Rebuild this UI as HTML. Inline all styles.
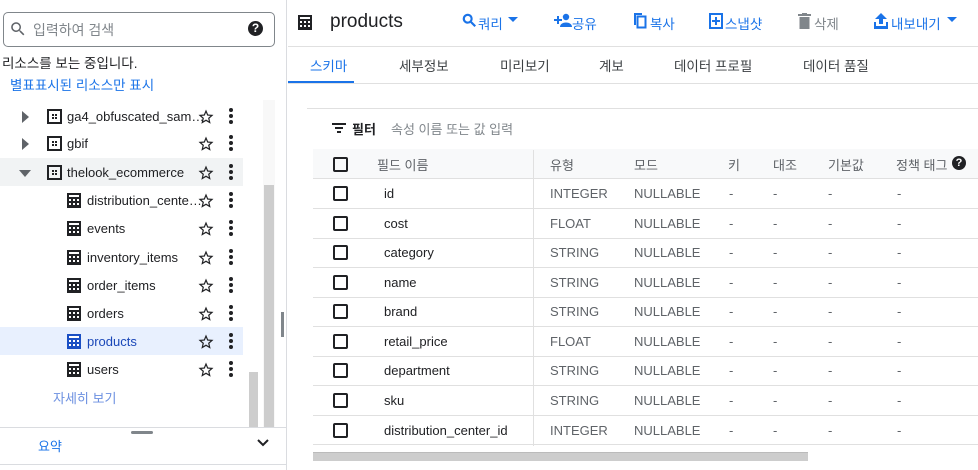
<!DOCTYPE html>
<html><head><meta charset="utf-8"><style>
*{margin:0;padding:0;box-sizing:border-box}
body{width:978px;height:470px;overflow:hidden;background:#fff;font-family:"Liberation Sans","Noto Sans CJK KR",sans-serif;color:#202124;position:relative;font-size:13px}
.a{position:absolute;white-space:nowrap}
.blue{color:#1a73e8}
.row{position:absolute;left:0;width:243px;height:28px}
.tb{position:absolute;left:67px;top:7px}
.ds{position:absolute;width:15px;height:15px;border:2px solid #202124}
.ds::before,.ds::after{content:"";position:absolute;left:3px;width:5px;height:2px;border-left:2px solid #202124;border-right:2px solid #202124;box-sizing:border-box}
.ds::before{top:3px}.ds::after{top:6px}
.star{position:absolute;left:197px}
.dots{position:absolute;left:229px;width:4px}
.dots i{display:block;width:4px;height:4px;border-radius:2px;background:#202124;margin-bottom:2px}
.cb{position:absolute;left:333px;width:15px;height:15px;border:2px solid #202124;border-radius:2px}
.tr{position:absolute;left:313px;width:665px;height:30px;border-bottom:1px solid #e0e0e0}
.tr span{position:absolute;top:7px}
.g{color:#5f6368}
.tab{position:absolute;top:55px;font-size:13.5px;color:#3c4043;white-space:nowrap}
</style></head><body>
<svg width="0" height="0" style="position:absolute"><defs>
<symbol id="tbl" viewBox="0 0 14 15"><rect width="14" height="15" fill="currentColor"/><g fill="#fff"><rect x="2" y="2" width="10" height="2"/><rect x="2" y="6" width="2" height="2"/><rect x="6" y="6" width="2" height="2"/><rect x="10" y="6" width="2" height="2"/><rect x="2" y="10" width="2" height="2"/><rect x="6" y="10" width="2" height="2"/><rect x="10" y="10" width="2" height="2"/></g></symbol>
<symbol id="star" viewBox="0 0 24 24"><path d="M22 9.24l-7.19-.62L12 2 9.19 8.63 2 9.24l5.46 4.73L5.82 21 12 17.27 18.18 21l-1.63-7.03L22 9.24zM12 15.4l-3.76 2.27 1-4.28-3.32-2.88 4.38-.38L12 6.1l1.71 4.04 4.38.38-3.32 2.88 1 4.28L12 15.4z" fill="#202124"/></symbol>
</defs></svg>
<!-- left panel -->
<div class="a" style="left:3px;top:12px;width:272px;height:35px;border:1px solid #80868b;border-radius:5px"></div>
<svg class="a" style="left:9px;top:20px" width="18" height="18" viewBox="0 0 24 24"><path d="M15.5 14h-.8l-.3-.3A6.5 6.5 0 1 0 9.5 16a6.5 6.5 0 0 0 4.2-1.6l.3.3v.8l5 5 1.5-1.5-5-5zm-6 0A4.5 4.5 0 1 1 14 9.5 4.5 4.5 0 0 1 9.5 14z" fill="#5f6368"/></svg>
<div class="a" style="left:33px;top:20px;font-size:14px;color:#80868b">입력하여 검색</div>
<div class="a" style="left:248px;top:21px;width:15px;height:15px;border-radius:50%;background:#202124;color:#fff;font-size:12px;font-weight:bold;text-align:center;line-height:15px">?</div>
<div class="a" style="left:2px;top:52px;font-size:13.5px">리소스를 보는 중입니다.</div>
<div class="a blue" style="left:10px;top:74px;font-size:13.5px">별표표시된 리소스만 표시</div>
<div class="a" style="left:263px;top:100px;width:12px;height:327px;background:#f8f8f8"></div>
<div class="a" style="left:264px;top:185px;width:10px;height:242px;background:#cdcdcd"></div>
<div class="a" style="left:249px;top:372px;width:9px;height:55px;background:#cdcdcd"></div>
<div class="a" style="left:286px;top:0;width:1px;height:470px;background:#dadce0"></div>
<div class="a" style="left:281px;top:312px;width:3px;height:25px;background:#80868b"></div>

<div class="row" style="top:103px"><div class="a" style="left:22px;top:8px;border-left:7px solid #5f6368;border-top:6px solid transparent;border-bottom:6px solid transparent"></div><div class="ds" style="left:47px;top:6px"></div><div class="a" style="left:67px;top:6px">ga4_obfuscated_sam…</div><svg class="star" style="top:5px" width="18" height="18"><use href="#star"/></svg><div class="dots" style="top:5px"><i></i><i></i><i></i></div></div>
<div class="row" style="top:130px"><div class="a" style="left:22px;top:8px;border-left:7px solid #5f6368;border-top:6px solid transparent;border-bottom:6px solid transparent"></div><div class="ds" style="left:47px;top:6px"></div><div class="a" style="left:67px;top:6px">gbif</div><svg class="star" style="top:5px" width="18" height="18"><use href="#star"/></svg><div class="dots" style="top:5px"><i></i><i></i><i></i></div></div>
<div class="row" style="top:158px;background:#f1f3f4"><div class="a" style="left:19px;top:12px;border-top:7px solid #5f6368;border-left:6px solid transparent;border-right:6px solid transparent"></div><div class="ds" style="left:47px;top:7px"></div><div class="a" style="left:67px;top:7px">thelook_ecommerce</div><svg class="star" style="top:6px" width="18" height="18"><use href="#star"/></svg><div class="dots" style="top:6px"><i></i><i></i><i></i></div></div>

<div class="row" style="top:186px"><svg class="tb" width="14" height="15" style="color:#202124"><use href="#tbl"/></svg><div class="a" style="left:87px;top:7px">distribution_cente…</div><svg class="star" style="top:6px" width="18" height="18"><use href="#star"/></svg><div class="dots" style="top:6px"><i></i><i></i><i></i></div></div>
<div class="row" style="top:214px"><svg class="tb" width="14" height="15" style="color:#202124"><use href="#tbl"/></svg><div class="a" style="left:87px;top:7px">events</div><svg class="star" style="top:6px" width="18" height="18"><use href="#star"/></svg><div class="dots" style="top:6px"><i></i><i></i><i></i></div></div>
<div class="row" style="top:243px"><svg class="tb" width="14" height="15" style="color:#202124"><use href="#tbl"/></svg><div class="a" style="left:87px;top:7px">inventory_items</div><svg class="star" style="top:6px" width="18" height="18"><use href="#star"/></svg><div class="dots" style="top:6px"><i></i><i></i><i></i></div></div>
<div class="row" style="top:271px"><svg class="tb" width="14" height="15" style="color:#202124"><use href="#tbl"/></svg><div class="a" style="left:87px;top:7px">order_items</div><svg class="star" style="top:6px" width="18" height="18"><use href="#star"/></svg><div class="dots" style="top:6px"><i></i><i></i><i></i></div></div>
<div class="row" style="top:299px"><svg class="tb" width="14" height="15" style="color:#202124"><use href="#tbl"/></svg><div class="a" style="left:87px;top:7px">orders</div><svg class="star" style="top:6px" width="18" height="18"><use href="#star"/></svg><div class="dots" style="top:6px"><i></i><i></i><i></i></div></div>
<div class="row" style="top:327px;background:#e8f0fe"><svg class="tb" width="14" height="15" style="color:#1a4fc4"><use href="#tbl"/></svg><div class="a" style="left:87px;top:7px;color:#1a47b8">products</div><svg class="star" style="top:6px" width="18" height="18"><use href="#star"/></svg><div class="dots" style="top:6px"><i></i><i></i><i></i></div></div>
<div class="row" style="top:355px"><svg class="tb" width="14" height="15" style="color:#202124"><use href="#tbl"/></svg><div class="a" style="left:87px;top:7px">users</div><svg class="star" style="top:6px" width="18" height="18"><use href="#star"/></svg><div class="dots" style="top:6px"><i></i><i></i><i></i></div></div>
<div class="a" style="left:53px;top:388px;font-size:13px;color:#6b8fe0">자세히 보기</div>
<div class="a" style="left:0;top:427px;width:287px;height:1px;background:#dadce0"></div>
<div class="a" style="left:131px;top:431px;width:22px;height:3px;background:#80868b;border-radius:2px"></div>
<div class="a blue" style="left:38px;top:436px;font-size:13px">요약</div>
<svg class="a" style="left:256px;top:438px" width="14" height="10" viewBox="0 0 14 10"><path d="M2 2l5 5 5-5" fill="none" stroke="#202124" stroke-width="2"/></svg>
<div class="a" style="left:0;top:464px;width:287px;height:1px;background:#dadce0"></div>

<!-- right header -->
<svg class="a" style="left:298px;top:15px;color:#202124" width="14" height="15"><use href="#tbl"/></svg>
<div class="a" style="left:330px;top:11px;font-size:19px">products</div>
<svg class="a" style="left:461px;top:12px" width="17" height="17" viewBox="0 0 24 24"><path d="M15.5 14h-.8l-.3-.3A6.5 6.5 0 1 0 9.5 16a6.5 6.5 0 0 0 4.2-1.6l.3.3v.8l5 5 1.5-1.5-5-5zm-6 0A4.5 4.5 0 1 1 14 9.5 4.5 4.5 0 0 1 9.5 14z" fill="#1a73e8" stroke="#1a73e8" stroke-width="1"/></svg>
<div class="a blue" style="left:478px;top:13px;font-size:13.5px">쿼리</div>
<svg class="a" style="left:508px;top:17px" width="10" height="6"><path d="M0 0h10L5 5z" fill="#1a73e8"/></svg>
<svg class="a" style="left:554px;top:13px" width="18" height="14" viewBox="0 0 18 14"><path d="M0 6h3V3h2v3h3v2H5v3H3V8H0z" fill="#1a73e8"/><circle cx="12" cy="4" r="3.2" fill="#1a73e8"/><path d="M6 14c0-3 3-4.5 6-4.5s6 1.5 6 4.5z" fill="#1a73e8"/></svg>
<div class="a blue" style="left:572px;top:13px;font-size:13.5px">공유</div>
<svg class="a" style="left:633px;top:13px" width="14" height="16" viewBox="0 0 14 16"><path d="M1 0h8v2H3v10H1z" fill="#1a73e8"/><rect x="4.5" y="3.5" width="8" height="11" fill="none" stroke="#1a73e8" stroke-width="2"/></svg>
<div class="a blue" style="left:650px;top:13px;font-size:13.5px">복사</div>
<svg class="a" style="left:709px;top:13px" width="14" height="16" viewBox="0 0 14 16"><rect x="1" y="1" width="12" height="14" fill="none" stroke="#1a73e8" stroke-width="2"/><path d="M6 4h2v3h3v2H8v3H6V9H3V7h3z" fill="#1a73e8"/></svg>
<div class="a blue" style="left:725px;top:13px;font-size:13.5px">스냅샷</div>
<svg class="a" style="left:798px;top:13px" width="13" height="16" viewBox="0 0 13 16"><rect x="0" y="1" width="13" height="2" fill="#80868b"/><rect x="4" y="0" width="5" height="2" fill="#80868b"/><rect x="1.5" y="4" width="10" height="12" fill="#80868b"/></svg>
<div class="a" style="left:814px;top:13px;font-size:13.5px;color:#80868b">삭제</div>
<svg class="a" style="left:874px;top:13px" width="14" height="16" viewBox="0 0 14 16"><path d="M7 0l6 6H9v5H5V6H1z" fill="#1a73e8"/><rect x="0" y="13" width="14" height="3" fill="#1a73e8"/><rect x="0" y="9" width="2" height="5" fill="#1a73e8"/><rect x="12" y="9" width="2" height="5" fill="#1a73e8"/></svg>
<div class="a blue" style="left:891px;top:13px;font-size:13.5px">내보내기</div>
<svg class="a" style="left:947px;top:17px" width="10" height="6"><path d="M0 0h10L5 5z" fill="#1a73e8"/></svg>
<div class="a" style="left:288px;top:46px;width:690px;height:1px;background:#e0e0e0"></div>
<!-- tabs -->
<div class="tab" style="left:310px;color:#1a73e8">스키마</div>
<div class="tab" style="left:399px">세부정보</div>
<div class="tab" style="left:500px">미리보기</div>
<div class="tab" style="left:599px">계보</div>
<div class="tab" style="left:674px">데이터 프로필</div>
<div class="tab" style="left:803px">데이터 품질</div>
<div class="a" style="left:288px;top:81px;width:66px;height:2px;background:#1a73e8"></div>
<div class="a" style="left:288px;top:83px;width:690px;height:1px;background:#e0e0e0"></div>
<div class="a" style="left:307px;top:108px;width:671px;height:1px;background:#e0e0e0"></div>
<!-- filter -->
<svg class="a" style="left:332px;top:122px" width="14" height="12" viewBox="0 0 14 12"><rect x="0" y="1" width="14" height="2" fill="#202124"/><rect x="3" y="5" width="8" height="2" fill="#202124"/><rect x="5" y="9" width="4" height="2" fill="#202124"/></svg>
<div class="a" style="left:352px;top:119px;font-size:13px;font-weight:bold">필터</div>
<div class="a" style="left:391px;top:119px;font-size:13px;color:#80868b">속성 이름 또는 값 입력</div>
<!-- table header -->
<div class="a" style="left:313px;top:149px;width:665px;height:30px;background:#f8f9fa;border-bottom:1px solid #e0e0e0"></div>
<div class="cb" style="top:157px"></div>
<div class="a" style="left:377px;top:155px;font-size:13px;color:#5f6368">필드 이름</div>
<div class="a" style="left:550px;top:155px;font-size:13px;color:#5f6368">유형</div>
<div class="a" style="left:634px;top:155px;font-size:13px;color:#5f6368">모드</div>
<div class="a" style="left:728px;top:155px;font-size:13px;color:#5f6368">키</div>
<div class="a" style="left:773px;top:155px;font-size:13px;color:#5f6368">대조</div>
<div class="a" style="left:828px;top:155px;font-size:13px;color:#5f6368">기본값</div>
<div class="a" style="left:896px;top:155px;font-size:13px;color:#5f6368">정책 태그</div>
<div class="a" style="left:952px;top:156px;width:14px;height:14px;border-radius:50%;background:#202124;color:#fff;font-size:11px;font-weight:bold;text-align:center;line-height:14px">?</div>
<div class="a" style="left:533px;top:150px;width:1px;height:296px;background:#e0e0e0"></div>
<!-- rows -->
<div class="tr" style="top:179px"><span style="left:71px">id</span><span class="g" style="left:237px">INTEGER</span><span class="g" style="left:321px">NULLABLE</span><span class="g" style="left:416px">-</span><span class="g" style="left:460px">-</span><span class="g" style="left:515px">-</span><span class="g" style="left:584px">-</span></div>
<div class="tr" style="top:209px"><span style="left:71px">cost</span><span class="g" style="left:237px">FLOAT</span><span class="g" style="left:321px">NULLABLE</span><span class="g" style="left:416px">-</span><span class="g" style="left:460px">-</span><span class="g" style="left:515px">-</span><span class="g" style="left:584px">-</span></div>
<div class="tr" style="top:238px"><span style="left:71px">category</span><span class="g" style="left:237px">STRING</span><span class="g" style="left:321px">NULLABLE</span><span class="g" style="left:416px">-</span><span class="g" style="left:460px">-</span><span class="g" style="left:515px">-</span><span class="g" style="left:584px">-</span></div>
<div class="tr" style="top:268px"><span style="left:71px">name</span><span class="g" style="left:237px">STRING</span><span class="g" style="left:321px">NULLABLE</span><span class="g" style="left:416px">-</span><span class="g" style="left:460px">-</span><span class="g" style="left:515px">-</span><span class="g" style="left:584px">-</span></div>
<div class="tr" style="top:297px"><span style="left:71px">brand</span><span class="g" style="left:237px">STRING</span><span class="g" style="left:321px">NULLABLE</span><span class="g" style="left:416px">-</span><span class="g" style="left:460px">-</span><span class="g" style="left:515px">-</span><span class="g" style="left:584px">-</span></div>
<div class="tr" style="top:327px"><span style="left:71px">retail_price</span><span class="g" style="left:237px">FLOAT</span><span class="g" style="left:321px">NULLABLE</span><span class="g" style="left:416px">-</span><span class="g" style="left:460px">-</span><span class="g" style="left:515px">-</span><span class="g" style="left:584px">-</span></div>
<div class="tr" style="top:356px"><span style="left:71px">department</span><span class="g" style="left:237px">STRING</span><span class="g" style="left:321px">NULLABLE</span><span class="g" style="left:416px">-</span><span class="g" style="left:460px">-</span><span class="g" style="left:515px">-</span><span class="g" style="left:584px">-</span></div>
<div class="tr" style="top:386px"><span style="left:71px">sku</span><span class="g" style="left:237px">STRING</span><span class="g" style="left:321px">NULLABLE</span><span class="g" style="left:416px">-</span><span class="g" style="left:460px">-</span><span class="g" style="left:515px">-</span><span class="g" style="left:584px">-</span></div>
<div class="tr" style="top:415px"><span style="left:71px;top:8px">distribution_center_id</span><span class="g" style="left:237px;top:8px">INTEGER</span><span class="g" style="left:321px;top:8px">NULLABLE</span><span class="g" style="left:416px;top:8px">-</span><span class="g" style="left:460px;top:8px">-</span><span class="g" style="left:515px;top:8px">-</span><span class="g" style="left:584px;top:8px">-</span></div>
<div class="cb" style="top:186px"></div><div class="cb" style="top:216px"></div><div class="cb" style="top:245px"></div><div class="cb" style="top:275px"></div><div class="cb" style="top:304px"></div><div class="cb" style="top:334px"></div><div class="cb" style="top:363px"></div><div class="cb" style="top:393px"></div><div class="cb" style="top:423px"></div>
<div class="a" style="left:313px;top:452px;width:495px;height:9px;background:#cdcdcd;border-top:1px solid #bbb"></div>
</body></html>
